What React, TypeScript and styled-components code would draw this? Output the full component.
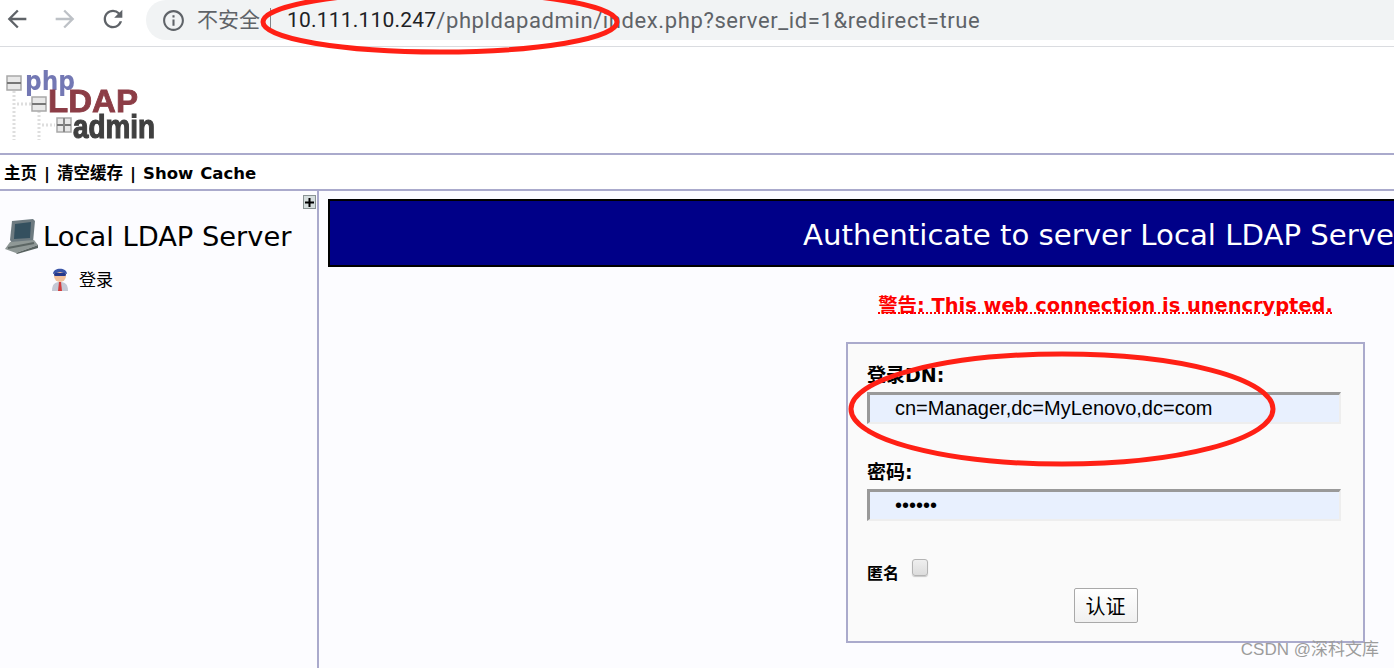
import styled, { createGlobalStyle } from "styled-components";

const GlobalStyle = createGlobalStyle`
  html, body {
    margin: 0;
    padding: 0;
    background: #fff;
  }
`;

const Page = styled.div`
  position: relative;
  width: 1394px;
  height: 668px;
  overflow: hidden;
  display: flex;
  flex-direction: column;
  font-family: "DejaVu Sans", "Noto Sans CJK SC", sans-serif;
  color: #000;
  background: #fcfcff;
`;

const BrowserBar = styled.div`
  flex: none;
  height: 46px;
  display: flex;
  align-items: flex-start;
  background: #fff;
  border-bottom: 1px solid #dadce0;
`;

const NavButton = styled.div<{ $left: number }>`
  width: 28px;
  height: 28px;
  margin: 5px 0 0 ${(p) => p.$left}px;
  flex: none;
  svg {
    display: block;
    width: 28px;
    height: 28px;
  }
`;

const AddressPill = styled.div`
  flex: 1;
  height: 40px;
  margin-left: 19px;
  padding-left: 15px;
  display: flex;
  align-items: center;
  background: #f1f3f4;
  border-radius: 20px 0 0 20px;
  font-family: "Roboto", "Noto Sans CJK SC", sans-serif;
  font-size: 21px;
  color: #5f6368;
  white-space: nowrap;
`;

const InfoIcon = styled.svg`
  width: 25px;
  height: 25px;
  flex: none;
  margin-right: 11px;
`;

const Insecure = styled.span`
  padding-right: 10px;
  margin-right: 16px;
  border-right: 1px solid #80868b;
  line-height: 25px;
`;

const Host = styled.span`
  color: #202124;
  letter-spacing: 0.2px;
`;

const UrlPath = styled.span`
  font-size: 22px;
  letter-spacing: 0.6px;
`;

const LogoRow = styled.header`
  flex: none;
  height: 106px;
  background: #fff;
  border-bottom: 2px solid #aaaacc;
  svg {
    display: block;
    filter: blur(0.5px);
  }
`;

const MenuRow = styled.nav`
  flex: none;
  height: 34px;
  padding-left: 4px;
  display: flex;
  align-items: center;
  background: #fff;
  border-bottom: 2px solid #aaaacc;
  font-size: 16.5px;
  font-weight: bold;
  word-spacing: 1.25px;
  white-space: pre;
`;

const Body = styled.div`
  flex: 1;
  min-height: 0;
  display: flex;
`;

const Sidebar = styled.aside`
  position: relative;
  flex: none;
  width: 313px;
  border-right: 2px solid #aaaacc;
  padding: 20px 0 0 4px;
`;

const ExpandBox = styled.div`
  position: absolute;
  top: 4px;
  right: 1px;
  width: 13px;
  height: 14px;
  box-sizing: border-box;
  border: 1px solid #8a9494;
  background: #d6dede;
  display: flex;
  align-items: center;
  justify-content: center;
  svg {
    display: block;
  }
`;

const ServerRow = styled.div`
  display: flex;
  align-items: center;
  gap: 4px;
  height: 50px;
  font-size: 27.3px;
  white-space: nowrap;
`;

const LoginRow = styled.div`
  display: flex;
  align-items: center;
  gap: 10px;
  margin: 5px 0 0 47px;
  font-size: 17px;
`;

const Main = styled.main`
  flex: 1;
  min-width: 0;
  padding: 8px 0 0 9px;
  display: flex;
  flex-direction: column;
`;

const TitleBar = styled.h1`
  margin: 0;
  height: 68px;
  box-sizing: border-box;
  padding: 3px 0 0 473px;
  display: flex;
  align-items: center;
  background: #000088;
  border: 2px solid #000;
  border-right: none;
  color: #fff;
  font-size: 29.2px;
  font-weight: normal;
  white-space: nowrap;
  overflow: hidden;
`;

const FormColumn = styled.div`
  width: 519px;
  margin: 26px 29px 0 0;
  align-self: flex-end;
`;

const Warning = styled.div`
  height: 49px;
  text-align: center;
  color: #ff0000;
  font-size: 19.4px;
  font-weight: bold;
  line-height: 26px;
  white-space: nowrap;
  text-decoration: underline dotted #ff0000;
`;

const LoginForm = styled.form`
  height: 301px;
  box-sizing: border-box;
  margin: 0;
  padding: 17px 23px 0 19px;
  background: #fafafa;
  border: 2px solid #aaaacc;
`;

const FieldLabel = styled.label`
  display: block;
  height: 31px;
  font-size: 19px;
  font-weight: bold;
  line-height: 28px;
  white-space: nowrap;
`;

const TextInput = styled.input`
  display: block;
  width: 474px;
  height: 32px;
  box-sizing: border-box;
  margin: 0 0 34px;
  padding: 0 0 0 25px;
  border-style: solid;
  border-width: 3px 2px 2px 3px;
  border-color: #999 #eee #eee #999;
  background: #e8f0fe;
  outline: none;
  color: #000;
  font-family: "Liberation Sans", sans-serif;
  font-size: 20px;
`;

const AnonRow = styled.div`
  display: flex;
  align-items: flex-start;
  gap: 13px;
  margin-top: 38px;
  font-size: 16px;
  font-weight: bold;
`;

const AnonLabel = styled.label`
  padding-top: 5px;
  line-height: 20px;
`;

const AnonCheck = styled.input`
  appearance: none;
  width: 16px;
  height: 17px;
  margin: 0;
  border: 1px solid #b4b4b4;
  border-radius: 3px;
  background: linear-gradient(#efefef, #dcdcdc);
  box-shadow: 0 1px 1px #c8c8c8;
`;

const SubmitRow = styled.div`
  display: flex;
  justify-content: center;
  margin-top: 4px;
  padding-left: 4px;
`;

const SubmitButton = styled.button`
  width: 64px;
  height: 35px;
  padding: 0;
  border: 1px solid #a9a9a9;
  border-radius: 2px;
  background: linear-gradient(#ffffff, #f0f0f0);
  color: #000;
  font-family: "Noto Sans CJK SC", sans-serif;
  font-size: 20px;
`;

const Annotations = styled.svg`
  position: absolute;
  inset: 0;
  pointer-events: none;
`;

const Watermark = styled.div`
  position: absolute;
  right: 15px;
  bottom: 8px;
  color: #9c9c9c;
  font-family: "Liberation Sans", "Noto Sans CJK SC", sans-serif;
  font-size: 17px;
  line-height: 20px;
  white-space: nowrap;
`;

function TreeBox({ x, y, open }: { x: number; y: number; open?: boolean }) {
  return (
    <g>
      <rect x={x} y={y} width="14" height="14" fill="#e8e8e8" stroke="#a8a8a8" strokeWidth="1.5" />
      <line x1={x} y1={y + 7} x2={x + 14} y2={y + 7} stroke="#777" strokeWidth="2" />
      {open && <line x1={x + 7} y1={y} x2={x + 7} y2={y + 14} stroke="#888" strokeWidth="2" />}
    </g>
  );
}

function Logo() {
  return (
    <svg width="170" height="104" viewBox="0 0 170 104">
      <g stroke="#dedede" strokeWidth="3" strokeDasharray="2 2" fill="none">
        <path d="M14 44V93M17 57H31M39 64V93M42 78H55" />
      </g>
      <TreeBox x={7} y={29} />
      <TreeBox x={32} y={50} />
      <TreeBox x={57} y={71} open />
      <text x="25" y="43" fontFamily="DejaVu Sans" fontWeight="bold" fontSize="27" fill="#7378b4" textLength="50" lengthAdjust="spacingAndGlyphs">
        php
      </text>
      <text x="48" y="65" fontFamily="Liberation Sans" fontWeight="bold" fontSize="31" fill="#8c3d46" stroke="#8c3d46" strokeWidth="0.8" textLength="90" lengthAdjust="spacingAndGlyphs">
        LDAP
      </text>
      <text x="73" y="91" fontFamily="Liberation Sans" fontWeight="bold" fontSize="34" fill="#404040" stroke="#404040" strokeWidth="1.2" textLength="82" lengthAdjust="spacingAndGlyphs">
        admin
      </text>
    </svg>
  );
}

function ServerIcon() {
  return (
    <svg width="35" height="36" viewBox="0 0 35 36">
      <path d="M8 3 L29 1 L31 3 L29 24 L8 25 L6 22 Z" fill="#6d7a80" />
      <path d="M11 6 L27 4 L26 20 L10 21 Z" fill="#34505f" />
      <path d="M6 24 L30 22 L34 27 L12 35 L1 31 Z" fill="#8f9896" />
      <path d="M4 30 L30 25" stroke="#5c6664" strokeWidth="2" />
      <path d="M12 35 L34 27 L34 30 L13 36 Z" fill="#586260" />
    </svg>
  );
}

function UserIcon() {
  return (
    <svg width="18" height="25" viewBox="0 0 18 25">
      <path d="M1 25 C1 18 4 16 9 16 C14 16 17 18 17 25 Z" fill="#c4c8d4" />
      <path d="M8 16 H10 L11 25 H7 Z" fill="#d23c3c" />
      <circle cx="9" cy="10" r="6" fill="#f2c09a" />
      <path d="M2 8 C2 1 16 1 16 8 L9 6 Z" fill="#3a55a8" />
      <rect x="3" y="7" width="12" height="3" rx="1.5" fill="#26388a" />
    </svg>
  );
}

export default function App() {
  return (
    <Page>
      <GlobalStyle />
      <BrowserBar>
        <NavButton $left={3}>
          <svg viewBox="0 0 24 24" fill="#5f6368">
            <path d="M20 11H7.83l5.59-5.59L12 4l-8 8 8 8 1.41-1.41L7.83 13H20v-2z" />
          </svg>
        </NavButton>
        <NavButton $left={20}>
          <svg viewBox="0 0 24 24" fill="#bdc1c6">
            <path d="M12 4l-1.41 1.41L16.17 11H4v2h12.17l-5.58 5.59L12 20l8-8z" />
          </svg>
        </NavButton>
        <NavButton $left={20}>
          <svg viewBox="0 0 24 24" fill="#5f6368">
            <path d="M17.65 6.35A7.958 7.958 0 0 0 12 4c-4.42 0-7.99 3.58-7.99 8s3.57 8 7.99 8c3.73 0 6.84-2.55 7.73-6h-2.08A5.99 5.99 0 0 1 12 18c-3.31 0-6-2.69-6-6s2.69-6 6-6c1.66 0 3.14.69 4.22 1.78L13 11h7V4l-2.35 2.35z" />
          </svg>
        </NavButton>
        <AddressPill>
          <InfoIcon viewBox="0 0 24 24" fill="#5f6368">
            <path d="M11 7h2v2h-2zm0 4h2v6h-2zm1-9C6.48 2 2 6.48 2 12s4.48 10 10 10 10-4.48 10-10S17.52 2 12 2zm0 18c-4.41 0-8-3.59-8-8s3.59-8 8-8 8 3.59 8 8-3.59 8-8 8z" />
          </InfoIcon>
          <Insecure>不安全</Insecure>
          <Host>10.111.110.247</Host>
          <UrlPath>/phpldapadmin/index.php?server_id=1&amp;redirect=true</UrlPath>
        </AddressPill>
      </BrowserBar>

      <LogoRow>
        <Logo />
      </LogoRow>

      <MenuRow>主页 | 清空缓存 | Show Cache</MenuRow>

      <Body>
        <Sidebar>
          <ExpandBox>
            <svg width="9" height="9" viewBox="0 0 9 9">
              <path d="M4.5 0V9M0 4.5H9" stroke="#000" strokeWidth="2" />
            </svg>
          </ExpandBox>
          <ServerRow>
            <ServerIcon />
            Local LDAP Server
          </ServerRow>
          <LoginRow>
            <UserIcon />
            登录
          </LoginRow>
        </Sidebar>

        <Main>
          <TitleBar>Authenticate to server Local LDAP Server</TitleBar>
          <FormColumn>
            <Warning>警告: This web connection is unencrypted.</Warning>
            <LoginForm>
              <FieldLabel>登录DN:</FieldLabel>
              <TextInput type="text" readOnly defaultValue="cn=Manager,dc=MyLenovo,dc=com" />
              <FieldLabel>密码:</FieldLabel>
              <TextInput type="password" readOnly defaultValue="secret" />
              <AnonRow>
                <AnonLabel>匿名</AnonLabel>
                <AnonCheck type="checkbox" />
              </AnonRow>
              <SubmitRow>
                <SubmitButton type="button">认证</SubmitButton>
              </SubmitRow>
            </LoginForm>
          </FormColumn>
        </Main>
      </Body>

      <Annotations width="1394" height="668" viewBox="0 0 1394 668">
        <ellipse cx="440" cy="22" rx="177" ry="30" fill="none" stroke="#ff2015" strokeWidth="5" />
        <ellipse cx="1062" cy="409" rx="211" ry="55" fill="none" stroke="#ff2015" strokeWidth="5" />
      </Annotations>
      <Watermark>CSDN @深科文库</Watermark>
    </Page>
  );
}
